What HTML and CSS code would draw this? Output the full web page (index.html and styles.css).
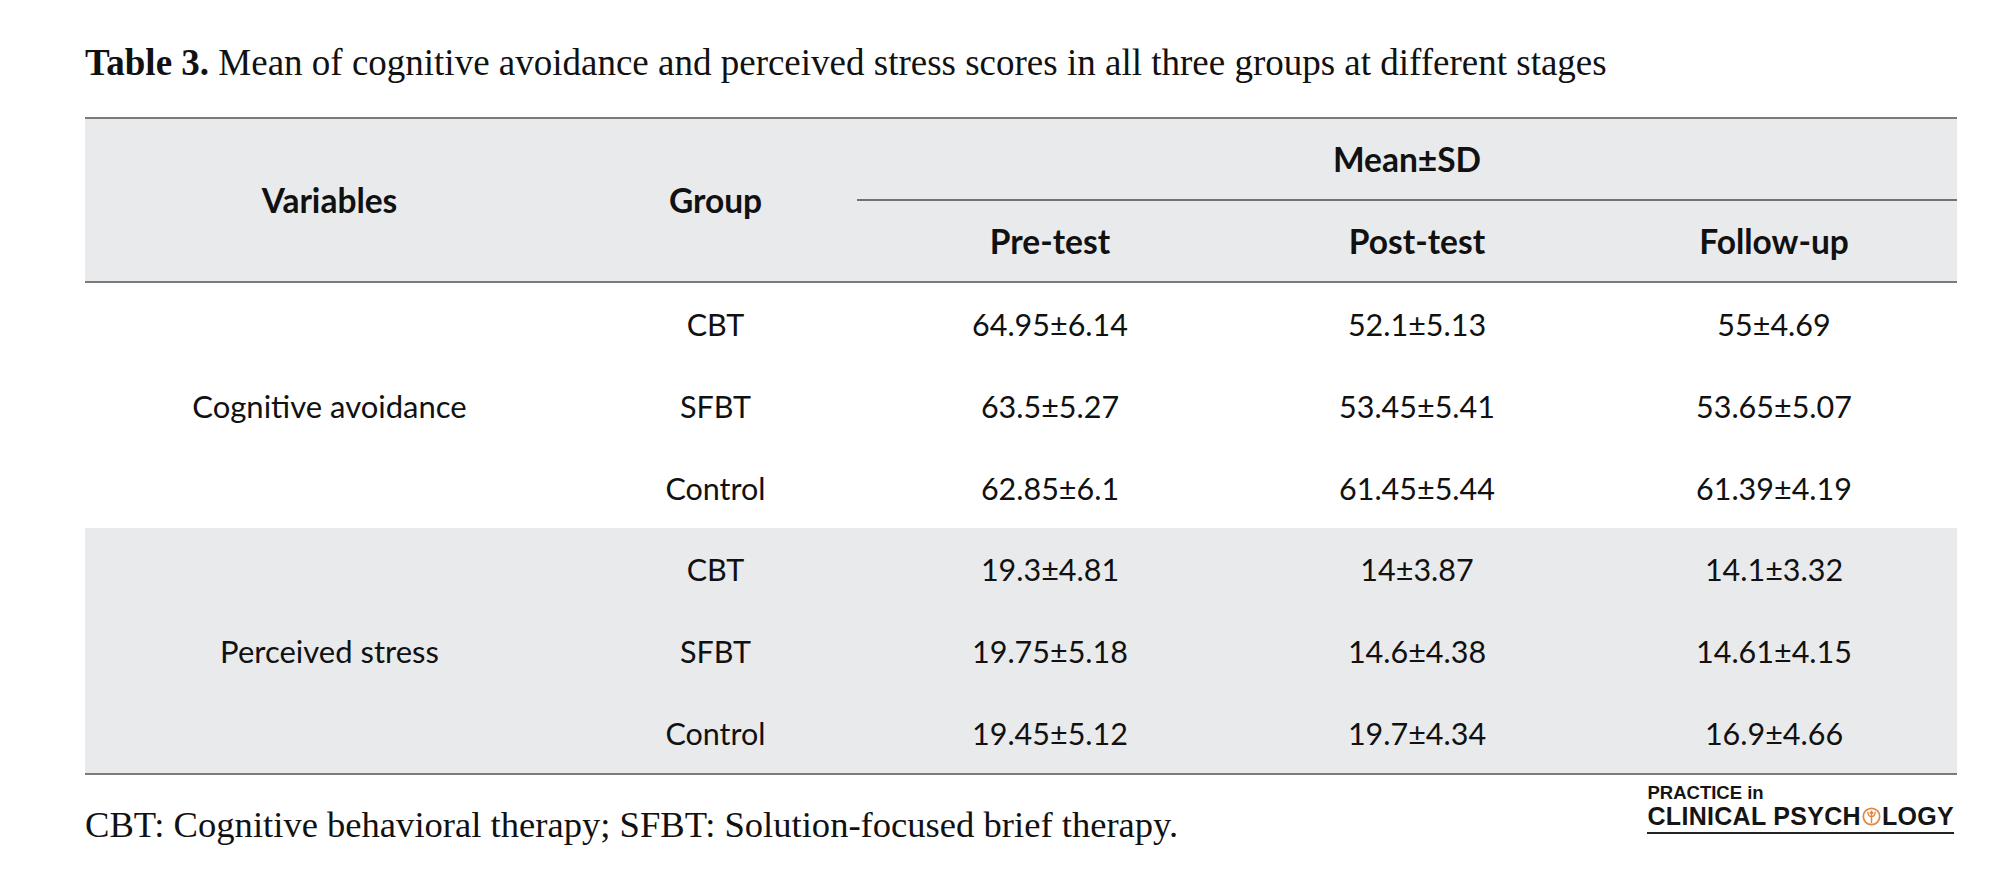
FILE: index.html
```html
<!DOCTYPE html>
<html lang="en">
<head>
<meta charset="utf-8">
<title>Table 3</title>
<link rel="stylesheet" href="styles.css">
</head>
<body>
<div class="page">
  <p class="caption"><b>Table 3.</b> Mean of cognitive avoidance and perceived stress scores in all three groups at different stages</p>

  <div class="tbl">
    <div class="grid thead">
      <div class="cell th span2 c1">Variables</div>
      <div class="cell th span2 c2">Group</div>
      <div class="cell th mean">Mean±SD</div>
      <div class="cell th">Pre-test</div>
      <div class="cell th">Post-test</div>
      <div class="cell th">Follow-up</div>
    </div>

    <div class="grid tgroup">
      <div class="cell var">Cognitive avoidance</div>
      <div class="cell">CBT</div>
      <div class="cell">64.95±6.14</div>
      <div class="cell">52.1±5.13</div>
      <div class="cell">55±4.69</div>
      <div class="cell">SFBT</div>
      <div class="cell">63.5±5.27</div>
      <div class="cell">53.45±5.41</div>
      <div class="cell">53.65±5.07</div>
      <div class="cell">Control</div>
      <div class="cell">62.85±6.1</div>
      <div class="cell">61.45±5.44</div>
      <div class="cell">61.39±4.19</div>
    </div>

    <div class="grid tgroup shaded">
      <div class="cell var">Perceived stress</div>
      <div class="cell">CBT</div>
      <div class="cell">19.3±4.81</div>
      <div class="cell">14±3.87</div>
      <div class="cell">14.1±3.32</div>
      <div class="cell">SFBT</div>
      <div class="cell">19.75±5.18</div>
      <div class="cell">14.6±4.38</div>
      <div class="cell">14.61±4.15</div>
      <div class="cell">Control</div>
      <div class="cell">19.45±5.12</div>
      <div class="cell">19.7±4.34</div>
      <div class="cell">16.9±4.66</div>
    </div>
  </div>

  <div class="foot">
    <p class="note">CBT: Cognitive behavioral therapy; SFBT: Solution-focused brief therapy.</p>
    <div class="logo">
      <div class="logo-top">PRACTICE in</div>
      <div class="logo-main">CLINICAL PSYCH<svg class="logo-icon" viewBox="0 0 20 20" width="19" height="19" aria-hidden="true"><circle cx="10" cy="10" r="8.6" fill="none" stroke="#e5863a" stroke-width="1.8"/><path d="M6.2 5.6 C6.4 9 7.8 10.3 10 10.3 C12.2 10.3 13.6 9 13.8 5.6 M10 4.6 V16.4 M8.6 6.6 L10 4.6 L11.4 6.6" fill="none" stroke="#e5863a" stroke-width="1.5" stroke-linecap="round"/></svg>LOGY</div>
    </div>
  </div>
</div>
</body>
</html>
```

FILE: styles.css
```css
html, body {
  margin: 0;
  padding: 0;
  background: #ffffff;
}

.page {
  width: 1872px;
  padding: 43px 0 0 85px;
  color: #111111;
}

.caption {
  margin: 0;
  height: 40px;
  font-family: "Liberation Serif", "Times New Roman", serif;
  font-size: 37px;
  line-height: 40px;
  white-space: nowrap;
}

.caption b {
  font-weight: 700;
}

.tbl {
  margin-top: 34px;
  font-family: Lato, "Open Sans", sans-serif;
  font-size: 30.5px;
  color: #111111;
}

.grid {
  display: grid;
  grid-template-columns: 489px 283px 386px 348px 366px;
}

.thead {
  grid-template-rows: 82px 80px;
  background: #e9eaec;
  border-top: 2px solid #7b7b7b;
  border-bottom: 2px solid #7b7b7b;
}

.cell {
  display: flex;
  align-items: center;
  justify-content: center;
  white-space: nowrap;
}

.th {
  font-weight: 700;
  font-size: 33.5px;
}

.span2 {
  grid-row: 1 / span 2;
}

.c1 { grid-column: 1; }
.c2 { grid-column: 2; }

.mean {
  grid-column: 3 / span 3;
  box-sizing: border-box;
  border-bottom: 2px solid #727272;
}

.tgroup {
  grid-template-rows: 82px 82px 81px;
}

.var {
  grid-column: 1;
  grid-row: 1 / span 3;
  font-size: 31px;
}

.shaded {
  background: #e9eaec;
  border-bottom: 2px solid #7b7b7b;
}

.foot {
  display: flex;
  justify-content: space-between;
  align-items: flex-start;
  padding-right: 3px;
}

.note {
  margin: 30px 0 0 0;
  font-family: "Liberation Serif", "Times New Roman", serif;
  font-size: 36.6px;
  line-height: 40px;
  white-space: nowrap;
}

.logo {
  margin-top: 8px;
  border-bottom: 2px solid #222222;
  padding-bottom: 3px;
  font-family: "Liberation Sans", Arial, sans-serif;
  font-weight: 700;
  color: #151515;
}

.logo-top {
  font-size: 18.5px;
  line-height: 20px;
}

.logo-main {
  display: flex;
  align-items: center;
  font-size: 25px;
  line-height: 26px;
  letter-spacing: 0.3px;
}

.logo-icon {
  margin: 0 1px 0 1px;
}
```
